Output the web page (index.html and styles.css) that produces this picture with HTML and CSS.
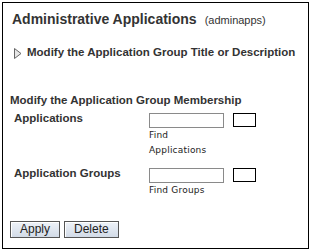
FILE: index.html
```html
<!DOCTYPE html>
<html>
<head>
<meta charset="utf-8">
<link rel="stylesheet" href="styles.css">
</head>
<body>
<div class="panel">
  <h1 class="title">Administrative Applications<span class="sub">(adminapps)</span></h1>
  <div class="toggle">
    <svg class="tri" width="8" height="11" viewBox="0 0 8 11"><path d="M0.5 0.5 L7 5.5 L0.5 10.5 Z" fill="#e6e6e6" stroke="#666" stroke-width="1"/></svg>
    <span class="toggle-text">Modify the Application Group Title or Description</span>
  </div>
  <h2 class="section">Modify the Application Group Membership</h2>
  <div class="form">
    <div class="label">Applications</div>
    <div class="field">
      <input class="text" type="text">
      <div class="hint">Find Applications</div>
    </div>
    <div class="btnbox"></div>

    <div class="label">Application Groups</div>
    <div class="field">
      <input class="text" type="text">
      <div class="hint">Find Groups</div>
    </div>
    <div class="btnbox"></div>
  </div>
  <div class="actions">
    <button class="btn">Apply</button>
    <button class="btn">Delete</button>
  </div>
</div>
</body>
</html>
```
FILE: styles.css
```css
html, body {
  margin: 0;
  padding: 0;
  background: #fff;
}
body {
  padding: 2px;
  font-family: "Liberation Sans", Arial, sans-serif;
  color: #333;
}
.panel {
  box-sizing: border-box;
  width: 307px;
  height: 247px;
  border: 1px solid #000;
  padding: 0 0 0 7px;
}
.title {
  margin: 8px 0 0 2px;
  font-size: 14px;
  line-height: 16px;
  font-weight: bold;
  color: #333;
}
.sub {
  font-size: 11px;
  font-weight: normal;
  margin-left: 8px;
  color: #333;
}
.toggle {
  margin: 17px 0 0 4px;
  display: flex;
  align-items: center;
  height: 14px;
}
.tri {
  display: block;
  margin-top: 2px;
}
.toggle-text {
  margin-left: 5px;
  font-size: 11.5px;
  line-height: 14px;
  font-weight: bold;
}
.section {
  margin: 34px 0 0 0;
  font-size: 11.5px;
  line-height: 14px;
  font-weight: bold;
}
.form {
  margin-top: 4px;
  display: grid;
  grid-template-columns: 130px 75px 23px;
  column-gap: 9px;
  row-gap: 8px;
  align-items: start;
}
.label {
  padding-left: 4px;
  font-size: 11.5px;
  line-height: 14px;
  font-weight: bold;
}
.field {
  padding-top: 2px;
}
.text {
  display: block;
  box-sizing: border-box;
  width: 75px;
  height: 15px;
  margin: 0;
  padding: 0;
  border: 1px solid #8a8a8a;
  background: #fff;
}
.hint {
  font-family: "DejaVu Sans", sans-serif;
  font-size: 9px;
  line-height: 15px;
  letter-spacing: 0.2px;
  color: #222;
}
.btnbox {
  box-sizing: border-box;
  margin-top: 2px;
  width: 23px;
  height: 14px;
  border: 1px solid #000;
  background: #fff;
}
.actions {
  margin-top: 23px;
  display: flex;
  gap: 4px;
}
.btn {
  box-sizing: border-box;
  height: 17px;
  margin: 0;
  padding: 0 9px;
  border: 1px solid #555;
  background: linear-gradient(#eef2f8, #d2dbe7);
  box-shadow: inset 1px 1px 0 #fff;
  font-family: "Liberation Sans", Arial, sans-serif;
  font-size: 12px;
  line-height: 15px;
  color: #222;
}
```
